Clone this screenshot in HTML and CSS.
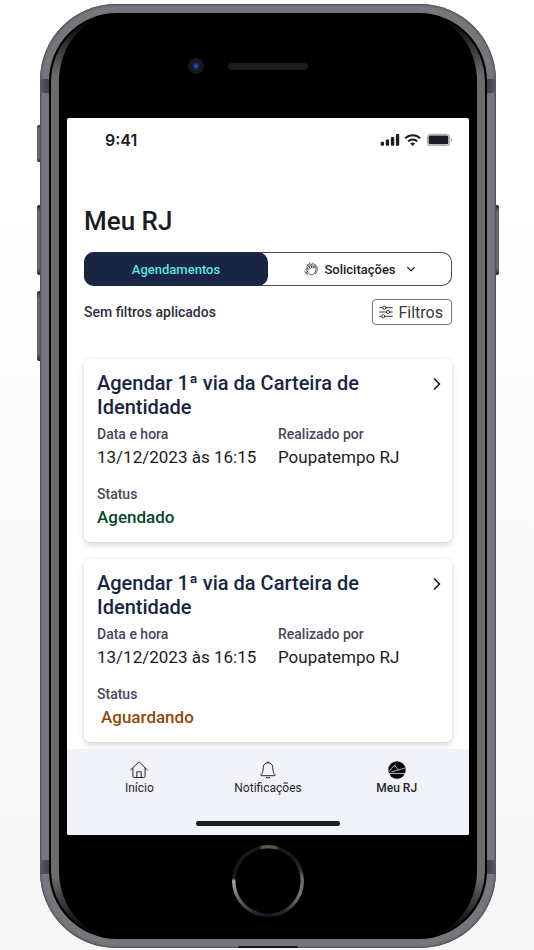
FILE: index.html
```html
<!DOCTYPE html>
<html lang="pt-BR">
<head>
<meta charset="utf-8">
<meta name="viewport" content="width=device-width, initial-scale=1">
<title>Meu RJ</title>
<link rel="stylesheet" href="styles.css">
</head>
<body>
<div class="phone">
  <span class="key key-mute"></span>
  <span class="key key-up"></span>
  <span class="key key-down"></span>
  <span class="key key-power"></span>
  <span class="band band-top"></span>
  <span class="band band-bottom"></span>
  <span class="port"></span>
  <div class="face">
    <span class="rim"></span>
    <div class="bezel-top">
      <span class="camera"></span>
      <span class="speaker"></span>
    </div>
    <div class="screen">
      <div class="status-bar">
        <span class="clock">9:41</span>
        <svg class="signals" width="73" height="14" viewBox="0 0 73 14" aria-hidden="true">
          <g fill="#1c1b22">
            <rect x="0.7" y="8.8" width="3.3" height="4" rx="1"/>
            <rect x="5.8" y="6.6" width="3.3" height="6.2" rx="1"/>
            <rect x="10.9" y="4" width="3.3" height="8.8" rx="1"/>
            <rect x="15.9" y="1" width="3.3" height="11.8" rx="1"/>
            <path d="M32.7 13 30.3 10.6a3.5 3.5 0 0 1 4.8 0Z"/>
          </g>
          <g fill="none" stroke="#1c1b22" stroke-width="2">
            <path d="M25.2 5.4a10.7 10.7 0 0 1 15 0"/>
            <path d="M28.1 8.4a6.6 6.6 0 0 1 9.2 0"/>
          </g>
          <rect x="47.4" y="1.4" width="22.2" height="11" rx="3" fill="none" stroke="#b3b3b6" stroke-width="1.3"/>
          <rect x="48.6" y="2.6" width="19.8" height="8.6" rx="1.6" fill="#1c1b22"/>
          <path d="M71 5v4q1.400-.6 1.400-2T71 5" fill="#aaaaad"/>
        </svg>
      </div>
      <main class="content">
        <h1>Meu RJ</h1>
        <div class="tabs">
          <button class="tab tab-active" type="button">Agendamentos</button>
          <button class="tab" type="button">
            <svg width="14" height="14" viewBox="0 0 14 14" fill="none" stroke="#1c1b22" stroke-width=".7" stroke-linecap="round" stroke-linejoin="round" aria-hidden="true">
              <path d="M3.300 9.300 2.200 7.300c-.4-.9.700-1.400 1.200-.7L4.600 8.100 3 4.600c-.4-.9.800-1.500 1.300-.7L6.200 6.600 4.700 3c-.3-.9.900-1.400 1.400-.6l2 3.700-.9-2.800c-.3-.9.900-1.300 1.300-.4l1.500 3.300.2-1.700c.2-1 1.400-.8 1.500.1.200 2.700.5 5-1.400 6.900-2.200 2.200-5.200 1.500-7-2.200Z"/>
              <path d="M8 1.400c1-.8 1.600 0 2 .9l.5 1M10.700 2.800c1.600-.5 2.400 1.900 2.500 4.400.1 2.100-.6 3.600-1.900 4.600M.9 9.500c.5 1.400 1.200 2.500 2.300 3.300M2.100 9.900c.4 1 .9 1.600 1.600 2.100M5.200.9l.9.6M3 2.200l.6.8"/>
            </svg>
            <span>Solicitações</span>
            <svg class="tab-caret" width="10" height="10" viewBox="0 0 10 10" fill="none" stroke="#1c1b22" stroke-width="1.200" stroke-linecap="round" stroke-linejoin="round" aria-hidden="true"><path d="m1.700 3.500 3.300 3.300 3.300-3.300"/></svg>
          </button>
        </div>
        <div class="filter-row">
          <p>Sem filtros aplicados</p>
          <button class="filter-button" type="button">
            <svg width="14" height="14" viewBox="0 0 14 14" fill="none" stroke="#38373f" stroke-width="1" stroke-linecap="round" aria-hidden="true">
              <path d="M.7 2.700h3M7 2.700h6.300M.7 7h6.600M10.700 7h2.600M.7 11.300h2M6 11.300h7.300"/>
              <circle cx="5.300" cy="2.700" r="1.600"/><circle cx="9" cy="7" r="1.600"/><circle cx="4.300" cy="11.300" r="1.600"/>
            </svg>
            <span>Filtros</span>
          </button>
        </div>
        <div class="cards">
          <article class="card">
            <a class="card-head" href="#agendamento-1">
              <h2>Agendar 1ª via da Carteira de Identidade</h2>
              <svg width="10" height="14" viewBox="0 0 10 14" fill="none" stroke="#1c1b22" stroke-width="1.700" stroke-linecap="round" stroke-linejoin="round" aria-hidden="true"><path d="m2.500 2 5 5-5 5"/></svg>
            </a>
            <dl class="details">
              <div><dt>Data e hora</dt><dd>13/12/2023 às 16:15</dd></div>
              <div><dt>Realizado por</dt><dd>Poupatempo RJ</dd></div>
              <div><dt>Status</dt><dd class="status status-done">Agendado</dd></div>
            </dl>
          </article>
          <article class="card">
            <a class="card-head" href="#agendamento-2">
              <h2>Agendar 1ª via da Carteira de Identidade</h2>
              <svg width="10" height="14" viewBox="0 0 10 14" fill="none" stroke="#1c1b22" stroke-width="1.700" stroke-linecap="round" stroke-linejoin="round" aria-hidden="true"><path d="m2.500 2 5 5-5 5"/></svg>
            </a>
            <dl class="details">
              <div><dt>Data e hora</dt><dd>13/12/2023 às 16:15</dd></div>
              <div><dt>Realizado por</dt><dd>Poupatempo RJ</dd></div>
              <div><dt>Status</dt><dd class="status status-waiting">Aguardando</dd></div>
            </dl>
          </article>
        </div>
      </main>
      <nav class="bottom-nav">
        <div class="nav-links">
          <a href="#inicio">
            <svg width="18" height="18" viewBox="0 0 18 18" fill="none" stroke="#26252c" stroke-width="1" stroke-linecap="round" stroke-linejoin="round" aria-hidden="true">
              <path d="M.9 8.700 8.200 1.500q.8-.7 1.600 0l7.300 7.200M2.900 7v8.200q0 1.300 1.300 1.300h9.600q1.300 0 1.300-1.300V7M6.800 16.400v-5.600h4.400v5.600"/>
            </svg>
            <span>Início</span>
          </a>
          <a href="#notificacoes">
            <svg width="18" height="18" viewBox="0 0 18 18" fill="none" stroke="#26252c" stroke-width="1" stroke-linecap="round" stroke-linejoin="round" aria-hidden="true">
              <path d="M9 1.700c-3.100 0-4.800 2.200-4.800 5.100 0 4.100-1 5.700-2.200 6.900-.4.500-.2 1 .4 1h13.200c.6 0 .8-.5.400-1-1.200-1.200-2.200-2.800-2.200-6.900 0-2.900-1.700-5.100-4.800-5.100ZM9 .8v.7M7.300 16.500q1.700 1.400 3.400 0"/>
            </svg>
            <span>Notificações</span>
          </a>
          <a class="current" href="#meu-rj" aria-current="page">
            <svg width="18" height="18" viewBox="0 0 18 18" aria-hidden="true">
              <circle cx="9" cy="9" r="8.700" fill="#000"/>
              <g fill="none" stroke="#f1f2f7" stroke-width=".8" stroke-linejoin="round">
                <path d="M1 10.200c1.800-.3 2.600-4.800 5.300-5.300 1.900-.3 2.500 3.400 4.300 3.900 2.200-.2 3.900-1.200 6.700-1.900"/>
                <path d="M3.500 10.800c2.300-.1 4.700-1.300 7.100-2M1.200 12.400h15.700"/>
                <path d="M6.700 5 7.500 3.700"/>
              </g>
            </svg>
            <span>Meu RJ</span>
          </a>
        </div>
        <span class="home-indicator"></span>
      </nav>
    </div>
    <div class="bezel-bottom"><span class="home-button"></span></div>
  </div>
</div>
</body>
</html>
```
FILE: styles.css
```css
* { box-sizing: border-box; }
body {
  margin: 0;
  padding: 4px 38px 3px 40px;
  background: linear-gradient(#fff 20%, #f6f6f7 95%);
  color: #1c1b22;
  font-family: Roboto, "Liberation Sans", sans-serif;
}
h1, h2, p, dl, dd { margin: 0; }
button { font: inherit; color: inherit; cursor: pointer; }
a { color: inherit; text-decoration: none; }
svg { flex: none; display: block; }

/* Device body */
.phone {
  position: relative;
  padding: 9px;
  border-radius: 76px;
  background: #77767d;
  box-shadow: inset 0 0 2px 1px #4a4a50;
}
.key {
  position: absolute;
  left: -3px;
  width: 3px;
  height: 70px;
  border-radius: 2px 0 0 2px;
  background: linear-gradient(#27272b, #66656c 10%, #66656c 90%, #27272b);
}
.key-mute { top: 121px; height: 37px; }
.key-up { top: 201px; }
.key-down { top: 287px; }
.key-power { top: 201px; left: auto; right: -3px; border-radius: 0 2px 2px 0; }
.band { position: absolute; left: 0; right: 0; height: 14px; background: linear-gradient(90deg, #595c63, #3e4147 9px, #3e4147 calc(100% - 9px), #595c63); }
.band-top { top: 75px; }
.band-bottom { bottom: 74px; }
.port { position: absolute; bottom: 0; left: 50%; width: 60px; height: 2px; margin-left: -30px; border-radius: 2px 2px 0 0; background: #151517; }
.face {
  position: relative;
  padding: 0 18px;
  border-radius: 68px;
  background: #000;
}
.rim {
  position: absolute;
  inset: 2px;
  border: solid #6b6b6c;
  border-width: 0 8px;
  border-radius: 66px;
  -webkit-mask-image: linear-gradient(transparent 4px, #000 60px, #000 calc(100% - 60px), transparent calc(100% - 4px));
  mask-image: linear-gradient(transparent 4px, #000 60px, #000 calc(100% - 60px), transparent calc(100% - 4px));
}
.bezel-top { position: relative; height: 105px; }
.camera {
  position: absolute;
  top: 45px;
  left: 121px;
  width: 16px;
  height: 16px;
  border-radius: 50%;
  background: radial-gradient(circle, #2f4fa8 0 1px, #101d55 3px, #17181c 5px);
}
.speaker { position: absolute; top: 50px; left: 50%; width: 80px; height: 7px; margin-left: -40px; border-radius: 4px; background: #1d1d1d; }
.bezel-bottom { display: flex; justify-content: center; padding: 10px 0 22px; }
.home-button {
  width: 72px;
  height: 72px;
  border-radius: 50%;
  background:
    radial-gradient(circle, #000 32px, transparent 33px),
    conic-gradient(#55545b 0 12deg, #17171c 20deg 45deg, #2c2c33 70deg, #6a6970 85deg, #77767d 115deg, #2b2b31 150deg, #15161c 180deg, #2a2b35 205deg, #66656b 240deg, #aaa9ad 270deg, #17171c 275deg 345deg, #55545b 350deg);
}

/* Screen */
.screen { position: relative; display: flex; flex-direction: column; overflow: hidden; border-radius: 2px; background: #fff; }
.status-bar { display: flex; align-items: center; justify-content: space-between; padding: 12px 16px 10px 38px; }
.clock { font: 600 16px/20px Inter, Roboto, sans-serif; }
.content { padding: 43px 17px 7px; }
h1 { font-size: 26px; line-height: 36px; font-weight: 500; }
.tabs {
  display: grid;
  grid-template-columns: 1fr 1fr;
  margin-top: 13px;
  border-radius: 10px;
  box-shadow: inset 0 0 0 1px #49475a;
}
.tab {
  display: flex;
  align-items: center;
  justify-content: center;
  gap: 6px;
  height: 34px;
  padding: 0;
  border: 0;
  border-radius: 10px;
  background: none;
  font-size: 13px;
  font-weight: 500;
}
.tab-active { background: #182644; color: #5de3e3; }
.tab-caret { margin-left: 4px; }
.filter-row { display: flex; align-items: center; justify-content: space-between; margin-top: 13px; }
.filter-row p { font-size: 14px; line-height: 20px; font-weight: 500; color: #302f38; }
.filter-button {
  display: flex;
  align-items: center;
  gap: 5px;
  height: 26px;
  padding: 0 8px 0 6px;
  border: 1px solid #74737e;
  border-radius: 4px;
  background: none;
  color: #38373f;
  font-size: 16px;
}
.cards { display: grid; gap: 17px; margin-top: 34px; }
.card { padding: 12px 10px 12px 13px; border-radius: 6px; background: #fff; box-shadow: 0 3px 6px rgba(0, 0, 0, .16), 0 0 2px rgba(0, 0, 0, .08); }
.card-head { display: flex; justify-content: space-between; gap: 16px; color: #182644; }
.card-head svg { margin-top: 6px; }
h2 { font-size: 20px; line-height: 24px; font-weight: 500; }
.details { display: grid; grid-template-columns: repeat(2, minmax(0, 1fr)); column-gap: 17px; row-gap: 14px; margin-top: 5px; }
dt { color: #49475a; font-size: 14px; line-height: 20px; font-weight: 500; }
dd { font-size: 17px; line-height: 26px; white-space: nowrap; }
.status { font-weight: 500; }
.status-done { color: #07472a; }
.status-waiting { padding-left: 4px; color: #924b0b; }

.bottom-nav { display: grid; justify-items: center; gap: 25px; padding: 12px 8px 9px; background: #f2f3f8; }
.nav-links { display: grid; grid-template-columns: repeat(3, 1fr); justify-self: stretch; }
.nav-links a { display: grid; justify-items: center; gap: 1px; font-size: 12px; line-height: 16px; color: #26252c; }
.nav-links .current { font-weight: 500; }
.home-indicator { width: 144px; height: 5px; border-radius: 3px; background: #1c1f22; }
```
